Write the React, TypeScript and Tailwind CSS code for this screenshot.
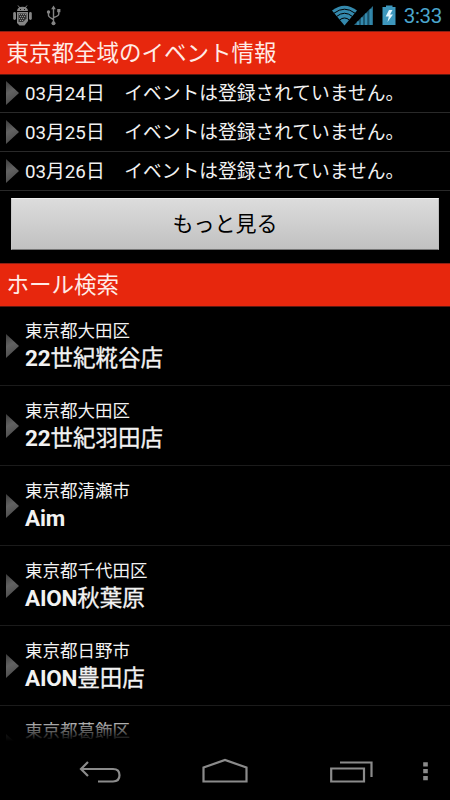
import React from "react";

const dates = ["03月24日", "03月25日", "03月26日"];

const halls = [
  { area: "東京都大田区", latin: "22", name: "世紀糀谷店" },
  { area: "東京都大田区", latin: "22", name: "世紀羽田店" },
  { area: "東京都清瀬市", latin: "Aim", name: "" },
  { area: "東京都千代田区", latin: "AION", name: "秋葉原" },
  { area: "東京都日野市", latin: "AION", name: "豊田店" },
  { area: "東京都葛飾区", latin: "", name: "" },
];

function Arrow() {
  return (
    <svg width="13" height="24" viewBox="0 0 13 24" className="shrink-0">
      <defs>
        <linearGradient id="arrow" x1="0" y1="0" x2="0.3" y2="1">
          <stop offset="0" stopColor="#3c3c3c" />
          <stop offset="0.5" stopColor="#626262" />
          <stop offset="1" stopColor="#4c4c4c" />
        </linearGradient>
      </defs>
      <path d="M0 0 L13 12 L0 24Z" fill="url(#arrow)" />
    </svg>
  );
}

function StatusBar() {
  return (
    <div className="flex h-[31px] shrink-0 items-start justify-between">
      <div className="flex pl-[13px] pt-[5px]">
        <svg width="19" height="21" viewBox="0 0 19 21" fill="#858585">
          <path d="M5 0.5 L7 3 M14 0.5 L12 3" stroke="#858585" strokeWidth="1" />
          <path d="M4 6 Q4.5 1.8 9.5 1.8 Q14.500 1.8 15 6Z" />
          <rect x="0.200" y="7" width="2.800" height="8" rx="1.4" />
          <rect x="16" y="7" width="2.800" height="8" rx="1.4" />
          <path d="M4 7H15V16L11.500 20.500H6.500L4 18Z" />
          <path d="M5.500 8.500H13.500V13.500L10 17H5.500Z" fill="#333" />
          <path d="M6 9.500H13M7 11.500H13M6 13.500H12M7 15.500H10" stroke="#929292" strokeDasharray="1 1" />
          <path d="M7 4.500H8M11 4.500H12" stroke="#111" />
        </svg>
        <svg width="16" height="21" viewBox="0 0 16 21" className="ml-[14px]" fill="none" stroke="#858585" strokeWidth="1.4">
          <path d="M7.500 3V18M2.500 7V10.500Q2.500 12 7.500 14.500M12.800 6V9Q12.800 11 7.500 12.500" />
          <path d="M5.200 4.200L7.500 0.500L9.800 4.200Z" fill="#858585" stroke="none" />
          <circle cx="7.500" cy="18.300" r="2" fill="#858585" stroke="none" />
          <circle cx="2.500" cy="7" r="1.700" fill="#858585" stroke="none" />
          <rect x="11.200" y="4" width="3.200" height="3.200" fill="#858585" stroke="none" />
        </svg>
      </div>
      <div className="flex pr-[8px] pt-[5px]">
        <svg width="65" height="21" viewBox="0 0 65 21">
          <path d="M0 5.500Q12.500 -4 25 5.500L12.500 20.500Z" fill="#3489ad" />
          <g fill="none" stroke="#000" strokeWidth="1">
            <path d="M2 8.200Q12.500 0.200 23 8.200" />
            <path d="M4.500 11.500Q12.500 5 20.500 11.500" />
            <path d="M7.500 15Q12.500 11 17.500 15" />
          </g>
          <path d="M22 20L41 1V20Z" fill="#266985" />
          <path d="M26 20V16.500M30 20V12.500M34 20V8.500M38.800 20V4" stroke="#3489ad" strokeWidth="2.200" />
          <path d="M28 20V14M32 20V10M36.200 20V6" stroke="#123f52" strokeWidth="0.800" />
          <path d="M50.500 2H54V0.500H60.500V2H63.500V20H50.500Z" fill="#3d97bd" />
          <path d="M57 5L53.700 11.500H56.800L55.500 17L61 9.500H58L60.500 5Z" fill="#e5f7ff" />
        </svg>
        <span className="ml-[7px] mt-[-1px] font-[Roboto] text-[20.500px] leading-6 tracking-[-0.300px] text-[#4ba7cf]">3:33</span>
      </div>
    </div>
  );
}

function Heading({ children }: { children: React.ReactNode }) {
  return (
    <h2 className="flex h-[44px] shrink-0 items-center border-y border-t-[#8d2015] border-b-[#5e1710] bg-[#e7270d] pl-[6.500px] pt-px text-[22.500px] leading-none text-[#ffebe6]">
      {children}
    </h2>
  );
}

export default function App() {
  return (
    <div className="relative flex h-[800px] w-[450px] flex-col overflow-hidden bg-black font-[Roboto,'Noto_Sans_CJK_JP',sans-serif] text-[#f2f2f2]">
      <StatusBar />
      <Heading>東京都全域のイベント情報</Heading>
      <div className="-mt-px flex shrink-0 flex-col">
        {dates.map((date) => (
          <div key={date} className="flex h-[39px] shrink-0 items-center whitespace-nowrap border-b border-[#292929] pl-[6px] text-[18.750px] leading-none">
            <Arrow />
            <span className="ml-[6px] pt-[3px]">{date}</span>
            <span className="ml-[19.500px] pt-[3px]">イベントは登録されていません。</span>
          </div>
        ))}
      </div>
      <button className="mx-[11px] mt-[7px] flex h-[52px] shrink-0 items-center justify-center border border-t-[#eeeeee] border-r-[#bdbdbd] border-b-[#777777] border-l-[#c8c8c8] bg-gradient-to-b from-[#dcdcdc] to-[#c1c1c1] text-[21px] leading-none text-black">
        もっと見る
      </button>
      <div className="mt-[13px] flex shrink-0 flex-col">
        <Heading>ホール検索</Heading>
      </div>
      <div className="relative -mt-px flex h-[435px] shrink-0 flex-col overflow-hidden">
        {halls.map((hall, i) => (
          <div key={i} className="flex h-[80px] shrink-0 items-center whitespace-nowrap border-b border-[#1b1b1b] pl-[6px]">
            <Arrow />
            <div className="ml-[6px] flex h-[56px] flex-col">
              <span className="h-[26px] text-[17.500px] leading-[26px]">{hall.area}</span>
              <span className="h-[30px] text-[22.500px] leading-[29px]">
                <b className="font-bold tracking-[-0.200px]">{hall.latin}</b>
                <span className="[-webkit-text-stroke:0.300px_#f2f2f2]">{hall.name}</span>
              </span>
            </div>
          </div>
        ))}
        <div className="absolute inset-x-0 bottom-0 h-[24px] bg-gradient-to-b from-transparent to-black" />
      </div>
      <nav className="flex grow items-start bg-black">
        <svg width="450" height="59" viewBox="0 741 450 59" fill="none" stroke="#8b8b8b" strokeWidth="2.200">
          <path d="M88 762L81 769L88 776M81 769H113Q119.500 769 119.500 775.300Q119.500 781.500 113 781.500H98" />
          <path d="M203.500 781.500V767.500L225 760L246.500 767.500V781.500Z" />
          <path d="M331.200 768.500H364V781.500H331.200ZM340 762.500H371.500V777" />
          <path d="M423.200 764.300H427.800M423.200 771.200H427.800M423.200 778.100H427.800" strokeWidth="4.300" />
        </svg>
      </nav>
    </div>
  );
}
